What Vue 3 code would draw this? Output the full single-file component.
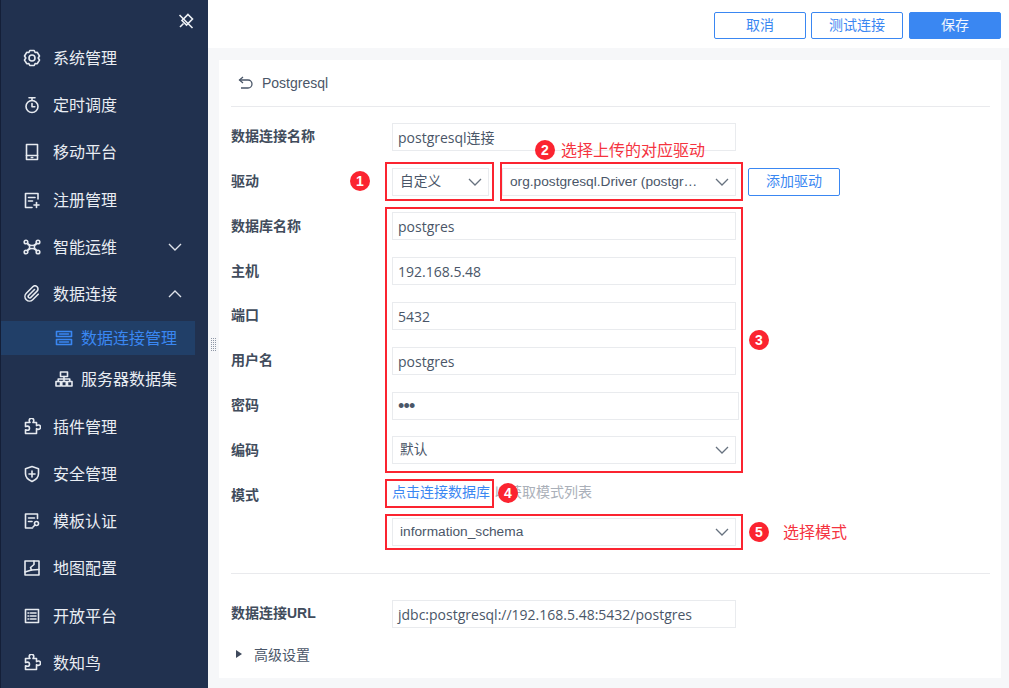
<script setup>
const puzzle = 'M7 4.5c-.6-.8-.8-1.4-.8-1.9a2.3 2.3 0 0 1 4.6 0c0 .5-.2 1.1-.8 1.9h3.5v3.2c.7-.5 1.3-.7 1.8-.7a2.2 2.2 0 0 1 0 4.4c-.5 0-1.1-.2-1.8-.7v4.8H2.5v-3.7c.8.4 1.4.5 1.9.5a2.1 2.1 0 0 0 0-4.2c-.5 0-1.1.1-1.9.5V4.5z'
const top1 = [
  { name: '系统管理', d: ['M6.8 1.500h4.400l.9 2 2.200-.2 2.200 3.700-1.300 2 1.300 2-2.200 3.700-2.200-.2-.9 2H6.800l-.9-2-2.200.2-2.200-3.700 1.300-2-1.300-2 2.200-3.700 2.200.2z', 'M12 9a3 3 0 1 1-6 0a3 3 0 1 1 6 0z'] },
  { name: '定时调度', d: ['M15 10.500a6 6 0 1 1-12 0a6 6 0 1 1 12 0z', 'M6 1.800h6', 'M9 1.800v2.700', 'M9 7.500v3.200h2.800'] },
  { name: '移动平台', d: ['M3.500 1.500h11v15h-11z', 'M3.500 12.500h11', 'M8.300 14.500h1.400'] },
  { name: '注册管理', d: ['M15 8V2.500H2.500v14H9', 'M5.500 6.500h6.500', 'M5.500 10h4', 'M13.500 11.500v5', 'M11 14h5'] },
  { name: '智能运维', chevron: 'down', d: ['M4.800 4a1.800 1.800 0 1 1-3.600 0a1.800 1.800 0 1 1 3.600 0z', 'M16.800 4a1.800 1.800 0 1 1-3.600 0a1.800 1.800 0 1 1 3.600 0z', 'M4.800 14a1.800 1.800 0 1 1-3.600 0a1.800 1.800 0 1 1 3.600 0z', 'M16.800 14a1.800 1.800 0 1 1-3.600 0a1.800 1.800 0 1 1 3.600 0z', 'M4.300 5.300C7 7 7 8 6.500 9C7 10 7 11 4.300 12.700', 'M13.700 5.300C11 7 11 8 11.500 9C11 10 11 11 13.700 12.700', 'M5 6.500C8 8 10 8 13 6.500', 'M5 11.500C8 10 10 10 13 11.500'] },
  { name: '数据连接', chevron: 'up', d: ['M11.500 4.500l-6 6a1.500 1.500 0 0 0 2.100 2.100l6.500-6.500a3 3 0 0 0-4.300-4.300l-6.500 6.500a4.500 4.500 0 0 0 6.400 6.400l5.500-5.500'] }
]
const subs = [
  { name: '数据连接管理', active: true, d: ['M1.500 2.500h15v5h-15z', 'M1.500 10.500h15v5h-15z', 'M4.500 5h9', 'M4.500 13h9'] },
  { name: '服务器数据集', d: ['M5.500 2h7v4.500h-7z', 'M1 11.500h4.500v4.500H1z', 'M6.800 11.500h4.500v4.500H6.800z', 'M12.500 11.500H17v4.500h-4.500z', 'M9 6.500v5', 'M3.200 11.500V9h11.600v2.500'] }
]
const bottom = [
  { name: '插件管理', d: [puzzle] },
  { name: '安全管理', d: ['M9 1.500l6.500 2.200v5c0 3.800-3 6.200-6.500 7.800c-3.500-1.600-6.500-4-6.500-7.800v-5z', 'M9 6v6', 'M6 9h6'] },
  { name: '模板认证', d: ['M14.500 6.500V2h-12v14h7', 'M5.500 6h6', 'M5.500 9.500h3.500', 'M15.500 11.500a2 2 0 1 1-4 0a2 2 0 1 1 4 0z', 'M12 13l-2 2'] },
  { name: '地图配置', d: ['M2 2h14v14H2z', 'M11 2v3.500L7.500 8.500l1 2.500-6.500 2', 'M8.500 11l7.500-.5'] },
  { name: '开放平台', d: ['M2.500 2.500h13v13h-13z', 'M7.500 6H13', 'M7.500 9H13', 'M7.500 12H13', 'M5 6h.8', 'M5 9h.8', 'M5 12h.8'] },
  { name: '数知鸟', d: [puzzle] }
]
const fields = [
  { label: '数据库名称', value: 'postgres' },
  { label: '主机', value: '192.168.5.48' },
  { label: '端口', value: '5432' },
  { label: '用户名', value: 'postgres' }
]
</script>

<template>
  <div class="app">
    <aside class="side">
      <div class="pin-row">
        <svg class="pin" width="16" height="16" viewBox="0 0 16 16">
          <path d="M10 1.500L14.500 6L8.500 12L4 7.500z" />
          <path d="M5.500 10.500L2 14" />
          <path d="M1.500 2L14.500 15" />
        </svg>
      </div>
      <div v-for="m in top1" :key="m.name" class="item">
        <svg class="ico" width="18" height="18" viewBox="0 0 18 18"><path v-for="p in m.d" :key="p" :d="p" /></svg>
        <span class="txt">{{ m.name }}</span>
        <svg v-if="m.chevron" class="chev" width="14" height="8" viewBox="0 0 14 8">
          <path :d="m.chevron === 'down' ? 'M1 1l6 6l6-6' : 'M1 7l6-6l6 6'" />
        </svg>
      </div>
      <div class="subs">
        <div v-for="s in subs" :key="s.name" class="sub" :class="{ active: s.active }">
          <svg class="ico" width="18" height="18" viewBox="0 0 18 18"><path v-for="p in s.d" :key="p" :d="p" /></svg>
          <span class="txt">{{ s.name }}</span>
        </div>
      </div>
      <div v-for="m in bottom" :key="m.name" class="item">
        <svg class="ico" width="18" height="18" viewBox="0 0 18 18"><path v-for="p in m.d" :key="p" :d="p" /></svg>
        <span class="txt">{{ m.name }}</span>
      </div>
    </aside>

    <main class="main">
      <header class="topbar">
        <button class="btn">取消</button>
        <button class="btn">测试连接</button>
        <button class="btn primary">保存</button>
      </header>
      <div class="handle"></div>
      <section class="card">
        <div class="head">
          <svg width="16" height="14" viewBox="0 0 16 14" class="back">
            <path d="M5 1L1.500 4L5 7" />
            <path d="M1.500 4H10a3.800 3.800 0 0 1 0 8H3" />
          </svg>
          <span>Postgresql</span>
        </div>

        <div class="form">
          <div class="row">
            <label>数据连接名称</label>
            <div class="input">postgresql连接</div>
          </div>
          <div class="row">
            <label>驱动</label>
            <div class="select narrow">
              <span class="val">自定义</span>
              <svg class="caret" width="14" height="8" viewBox="0 0 14 8"><path d="M1 1l6 6l6-6" /></svg>
            </div>
            <div class="select driver">
              <span class="val">org.postgresql.Driver (postgr…</span>
              <svg class="caret" width="14" height="8" viewBox="0 0 14 8"><path d="M1 1l6 6l6-6" /></svg>
            </div>
            <button class="btn add">添加驱动</button>
          </div>
          <div v-for="f in fields" :key="f.label" class="row">
            <label>{{ f.label }}</label>
            <div class="input">{{ f.value }}</div>
          </div>
          <div class="row">
            <label>密码</label>
            <div class="input pass">•••</div>
          </div>
          <div class="row">
            <label>编码</label>
            <div class="select wide">
              <span class="val">默认</span>
              <svg class="caret" width="14" height="8" viewBox="0 0 14 8"><path d="M1 1l6 6l6-6" /></svg>
            </div>
          </div>
          <div class="row mode">
            <label>模式</label>
            <div class="hint"><a>点击连接数据库</a><span>以获取模式列表</span></div>
          </div>
          <div class="row schema">
            <label></label>
            <div class="select wide">
              <span class="val">information_schema</span>
              <svg class="caret" width="14" height="8" viewBox="0 0 14 8"><path d="M1 1l6 6l6-6" /></svg>
            </div>
          </div>
          <div class="divider"></div>
          <div class="row url">
            <label>数据连接URL</label>
            <div class="input">jdbc:postgresql://192.168.5.48:5432/postgres</div>
          </div>
          <div class="adv"><i class="tri"></i><span>高级设置</span></div>
        </div>

        <div class="rbox b1"></div>
        <div class="rbox b2"></div>
        <div class="rbox b3"></div>
        <div class="rbox b4"></div>
        <div class="rbox b5"></div>
        <div class="badge n1">1</div>
        <div class="badge n2">2</div>
        <div class="badge n3">3</div>
        <div class="badge n4">4</div>
        <div class="badge n5">5</div>
        <div class="note t2">选择上传的对应驱动</div>
        <div class="note t5">选择模式</div>
      </section>
    </main>
  </div>
</template>

<style scoped>
.app {
  display: flex;
  width: 1009px;
  height: 688px;
  overflow: hidden;
  font-family: "Liberation Sans", "Noto Sans CJK SC", sans-serif;
  font-size: 14px;
  color: #4a5668;
  background: #f6f7f9;
}
.side {
  width: 208px;
  flex: none;
  background: #21314f;
  border-left: 1px solid #141f38;
  box-sizing: border-box;
  color: #e9edf3;
  font-size: 16px;
}
.pin-row {
  height: 34.4px;
  display: flex;
  justify-content: flex-end;
  padding: 13px 14px 0 0;
  box-sizing: border-box;
}
.pin { fill: none; stroke: #eef1f5; stroke-width: 1.6; }
.item {
  height: 47.2px;
  display: flex;
  align-items: center;
  padding-left: 22px;
}
.txt { margin-bottom: 2px; }
.ico {
  flex: none;
  margin-right: 12px;
  fill: none;
  stroke: #e6eaf0;
  stroke-width: 1.6;
  stroke-linejoin: round;
  stroke-linecap: round;
}
.chev {
  margin-left: auto;
  margin-right: 26px;
  fill: none;
  stroke: #dfe3ea;
  stroke-width: 1.4;
}
.subs {
  display: flex;
  flex-direction: column;
  gap: 7px;
  padding: 3.4px 0 7.4px;
}
.sub {
  width: 194px;
  height: 34px;
  display: flex;
  align-items: center;
  padding-left: 54px;
  box-sizing: border-box;
}
.sub .ico { margin-right: 8px; }
.sub.active {
  background: #213f68;
  color: #3a87f2;
}
.sub.active .ico { stroke: #3a87f2; }

.main {
  flex: 1;
  min-width: 0;
  position: relative;
}
.topbar {
  height: 48px;
  background: #fff;
  display: flex;
  justify-content: flex-end;
  gap: 5px;
  padding: 12px 8px 0 0;
  box-sizing: border-box;
}
.btn {
  width: 92px;
  height: 27px;
  padding: 0;
  border: 1px solid #3a87f2;
  border-radius: 2px;
  background: #fff;
  color: #3a87f2;
  font: inherit;
  line-height: 25px;
}
.btn.primary {
  margin-left: 1px;
  background: #3a87f2;
  color: #f1f6fe;
}
.handle {
  position: absolute;
  left: 3px;
  top: 338px;
  width: 6px;
  height: 14px;
  background-image: radial-gradient(circle at 0.5px 0.5px, #8f97a6 0.7px, transparent 0.8px);
  background-size: 2px 2px;
}
.card {
  position: relative;
  margin: 12px 8px 0 11px;
  height: 618px;
  background: #fff;
  padding: 0 11px 0 12px;
  box-sizing: border-box;
}
.head {
  height: 45px;
  padding-bottom: 1px;
  display: flex;
  align-items: center;
  gap: 8px;
  padding-left: 7px;
  border-bottom: 1px solid #e9eaed;
  box-sizing: content-box;
  font-size: 14px;
}
.back {
  fill: none;
  stroke: #4a5668;
  stroke-width: 1.3;
}
.form { padding-top: 7.4px; }
.row {
  height: 44.800px;
  display: flex;
  align-items: center;
}
.row label {
  width: 161px;
  flex: none;
  font-weight: 700;
  font-size: 14px;
  color: #414c5c;
  margin-bottom: 3px;
}
.input, .select {
  height: 28px;
  border: 1px solid #e9ebee;
  box-sizing: border-box;
  background: #fff;
}
.select { line-height: 26px; }
.input {
  width: 344px;
  padding-left: 5px;
  line-height: 28px;
  white-space: nowrap;
  overflow: hidden;
  font-family: "Open Sans", "Noto Sans CJK SC", sans-serif;
}
.input.pass {
  width: 347px;
  font-family: "Liberation Sans", sans-serif;
  font-size: 18px;
  letter-spacing: -0.8px;
  line-height: 26px;
}
.select {
  display: flex;
  align-items: center;
  padding: 0 6px 0 7px;
  font-size: 13.700px;
}
.select.narrow { width: 97px; }
.select.driver { width: 234px; margin-left: 13px; }
.select.wide { width: 344px; }
.val {
  flex: 1;
  min-width: 0;
  white-space: nowrap;
}
.caret {
  flex: none;
  fill: none;
  stroke: #67727f;
  stroke-width: 1.300;
}
.btn.add { width: 92px; margin-left: 12px; height: 28px; }
.hint { margin-top: -3px; }
.hint a { color: #3a87f2; margin-right: 4px; }
.hint span { color: #aab0b9; }
.row.mode { height: 40.400px; }
.row.mode label { margin-bottom: 0; margin-top: 2px; }
.row.schema { height: 37px; }
.divider {
  height: 1px;
  background: #e9eaed;
  margin-top: 23px;
}
.row.url { margin-top: 17.400px; height: 44.800px; }
.adv {
  display: flex;
  align-items: center;
  margin-top: 7.300px;
  padding-left: 5px;
}
.tri {
  width: 0;
  height: 0;
  border-left: 6px solid #3f4a5c;
  border-top: 4px solid transparent;
  border-bottom: 4px solid transparent;
  margin-right: 12px;
}
.rbox {
  position: absolute;
  border: 2px solid #fb2430;
  box-sizing: border-box;
}
.b1 { left: 166px; top: 102px; width: 109px; height: 39px; }
.b2 { left: 281px; top: 102px; width: 243px; height: 39px; }
.b3 { left: 166px; top: 147px; width: 358px; height: 266px; }
.b4 { left: 166px; top: 419px; width: 109px; height: 29px; }
.b5 { left: 166px; top: 454px; width: 358px; height: 36px; }
.badge {
  position: absolute;
  width: 20px;
  height: 20px;
  border-radius: 50%;
  background: #fb2430;
  color: #fff;
  font-size: 14px;
  font-weight: 700;
  line-height: 20px;
  text-align: center;
}
.n1 { left: 131px; top: 111px; }
.n2 { left: 316px; top: 80px; }
.n3 { left: 530px; top: 270px; }
.n4 { left: 279px; top: 423px; }
.n5 { left: 530px; top: 462px; }
.note {
  position: absolute;
  color: #f5333f;
  font-size: 16px;
  line-height: 20px;
  white-space: nowrap;
}
.t2 { left: 342px; top: 81px; }
.t5 { left: 564px; top: 463px; }
</style>
